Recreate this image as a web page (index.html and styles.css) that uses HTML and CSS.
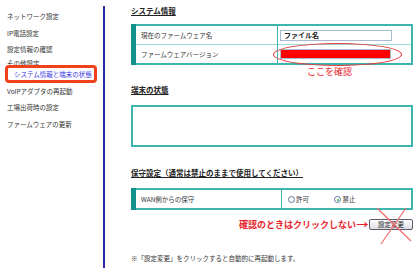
FILE: index.html
```html
<!DOCTYPE html>
<html lang="ja">
<head>
    <meta charset="UTF-8">
    <meta name="viewport" content="width=device-width, initial-scale=1.0">
    <title>システム情報と端末の状態</title>
    <link rel="stylesheet" href="styles.css">
</head>
<body>
    <div class="page">
        <div class="side">
            <ul class="menu">
                <li>ネットワーク設定</li>
                <li>IP電話設定</li>
                <li>設定情報の確認</li>
                <li class="hidden-item">その他設定</li>
                <li class="current">システム情報と端末の状態</li>
                <li>VoIPアダプタの再起動</li>
                <li>工場出荷時の設定</li>
                <li>ファームウェアの更新</li>
            </ul>
        </div>

        <div class="main">
            <h2 class="heading first">システム情報</h2>
            <table class="info">
                <tr>
                    <td class="label">現在のファームウェア名</td>
                    <td class="value"><div class="field">ファイル名</div></td>
                </tr>
                <tr>
                    <td class="label">ファームウェアバージョン</td>
                    <td class="value mark">
                        <div class="field red"></div>
                        <div class="oval"></div>
                    </td>
                </tr>
            </table>
            <div class="note-check">ここを確認</div>

            <h2 class="heading">端末の状態</h2>
            <div class="status-box"></div>

            <h2 class="heading third">保守設定（通常は禁止のままで使用してください）</h2>
            <table class="info">
                <tr>
                    <td class="label wan">WAN側からの保守</td>
                    <td class="value radios">
                        <span class="radio"></span>許可
                        <span class="radio checked"></span>禁止
                    </td>
                </tr>
            </table>

            <div class="actions">
                <span class="warn">確認のときはクリックしない<span class="arrow">→</span></span>
                <div class="btn-wrap">
                    <button class="button">設定変更</button>
                    <svg class="cross" width="40" height="38" viewBox="0 0 40 38">
                        <line x1="4" y1="1" x2="38" y2="34" stroke="#f06a6a" stroke-width="1.2"/>
                        <line x1="33" y1="1" x2="8" y2="37" stroke="#f06a6a" stroke-width="1.2"/>
                    </svg>
                </div>
            </div>

            <p class="footnote">※「設定変更」をクリックすると自動的に再起動します。</p>
        </div>
    </div>
</body>
</html>
```

FILE: styles.css
```css
body {
    margin: 0;
    font-family: "Noto Sans CJK JP", "Noto Sans", sans-serif;
    font-size: 6.5px;
    color: #333;
    background: #fff;
}
.page {
    display: flex;
    width: 419px;
    height: 273px;
}
.side {
    width: 103px;
    margin-top: 6px;
    height: 262px;
    border-right: 2px solid #2a2aa0;
}
.menu {
    list-style: none;
    margin: 0;
    padding: 2px 0 0 0;
}
.menu li {
    height: 16.5px;
    line-height: 16.5px;
    padding-left: 7px;
    white-space: nowrap;
}
.menu .hidden-item {
    height: 7px;
    line-height: 10px;
}
.menu .current {
    height: 12px;
    line-height: 12px;
    margin: 0 6px 0 5px;
    padding-left: 6px;
    border: 3px solid #f0401c;
    border-radius: 4px;
    background: #fff;
    color: #3434e6;
    position: relative;
}
.main {
    flex: 1;
    padding: 0 6px 0 26px;
}
.heading {
    margin: 6px 0 0;
    font-size: 7.5px;
    line-height: 10px;
    font-weight: bold;
    color: #222;
    text-decoration: underline;
}
.heading.first {
    margin-top: 6px;
}
.heading.third {
    margin-top: 21px;
}
.info {
    width: 100%;
    margin-top: 8px;
    border-collapse: collapse;
    border: 2px solid #3db5ae;
    border-left: 5px solid #11928a;
}
.heading.third + .info {
    margin-top: 10px;
}
.info td {
    height: 18px;
    padding: 0;
    border-top: 1px solid #9ad8d3;
}
.info tr:first-child td {
    border-top: none;
}
.info .label {
    width: 136px;
    padding-left: 5px;
    border-right: 1px solid #3db5ae;
}
.info .label.wan {
    width: 140px;
    height: 16px;
}
.info .value {
    padding-left: 2px;
}
.mark {
    position: relative;
}
.field {
    width: 107px;
    height: 9px;
    line-height: 9px;
    padding-left: 3px;
    border: 1px solid #a9bbd0;
    font-size: 7px;
    font-weight: bold;
    color: #222;
}
.field.red {
    width: 106px;
    height: 8px;
    background: #ff0000;
}
.oval {
    position: absolute;
    left: -5px;
    top: -2px;
    width: 127px;
    height: 21px;
    border: 1px solid #e23a3a;
    border-radius: 50%;
}
.note-check {
    height: 14px;
    line-height: 14px;
    padding-left: 176px;
    font-size: 9px;
    color: #e8242c;
}
.status-box {
    height: 38px;
    margin-top: 10px;
    border: 2px solid #3db5ae;
}
.radios {
    white-space: nowrap;
}
.radio {
    display: inline-block;
    width: 5px;
    height: 5px;
    margin: 0 1px 0 4px;
    border: 1px solid #5c76a0;
    border-radius: 50%;
    vertical-align: -1px;
    position: relative;
}
.radio.checked {
    margin-left: 24px;
}
.radio.checked::after {
    content: "";
    position: absolute;
    left: 1.5px;
    top: 1.5px;
    width: 2px;
    height: 2px;
    border-radius: 50%;
    background: #27a52b;
}
.actions {
    display: flex;
    justify-content: flex-end;
    align-items: center;
    gap: 2px;
    margin-top: 9px;
}
.warn {
    font-size: 9px;
    font-weight: bold;
    color: #e8242c;
    line-height: 11px;
}
.arrow {
    display: inline-block;
    transform: scaleX(1.4);
    margin-left: 2px;
}
.btn-wrap {
    position: relative;
}
.button {
    display: block;
    width: 44px;
    height: 11px;
    padding: 0;
    border: 1px solid #5a5a6a;
    border-radius: 2px;
    background: linear-gradient(#ffffff, #dcdce4);
    font-family: inherit;
    font-size: 6.5px;
    line-height: 9px;
    color: #222;
}
.cross {
    position: absolute;
    left: 4px;
    top: -12px;
}
.footnote {
    margin: 23px 0 0;
    line-height: 10px;
}
```
